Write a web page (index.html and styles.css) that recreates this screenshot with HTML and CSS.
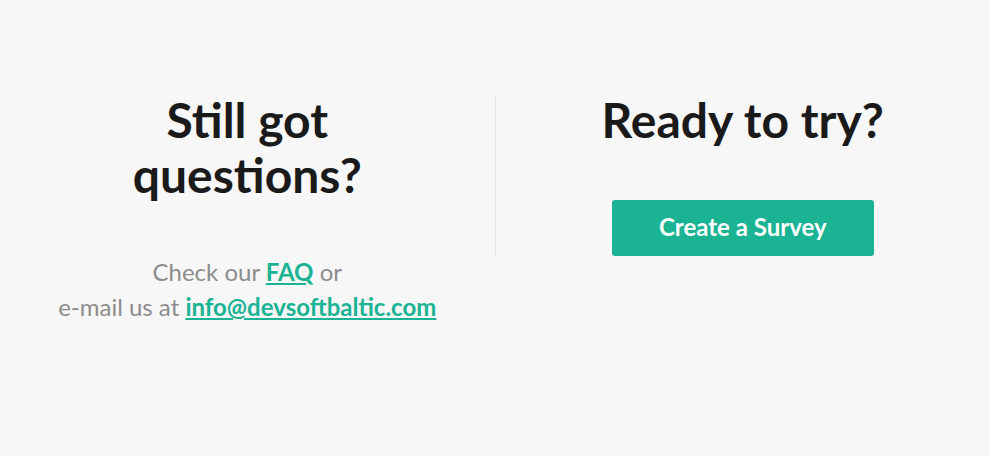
FILE: index.html
```html
<!DOCTYPE html>
<html>
<head>
<meta charset="utf-8">
<link rel="stylesheet" href="styles.css">
</head>
<body>
<section class="contact">
  <div class="col">
    <h2 class="title title-narrow">Still got questions?</h2>
    <p class="text">Check our <a href="#">FAQ</a> or<br>e-mail us at <a href="#">info@devsoftbaltic.com</a></p>
  </div>
  <div class="divider"></div>
  <div class="col">
    <h2 class="title">Ready to try?</h2>
    <a class="btn" href="#">Create a Survey</a>
  </div>
</section>
</body>
</html>
```
FILE: styles.css
```css
html, body {
  margin: 0;
  padding: 0;
  background: #f7f7f7;
}
body {
  font-family: Lato, "Open Sans", sans-serif;
  height: 456px;
}
.contact {
  display: flex;
  align-items: flex-start;
  padding-top: 92px;
}
.col {
  flex: 1 1 0;
  display: flex;
  flex-direction: column;
  align-items: center;
  text-align: center;
}
.divider {
  flex: 0 0 1px;
  height: 160px;
  margin-top: 4px;
  background: #e6e6e6;
}
.title {
  margin: 0;
  font-size: 48px;
  line-height: 55px;
  font-weight: 700;
  color: #1a1a1a;
}
.title-narrow {
  max-width: 300px;
}
.text {
  margin: 52px 0 0;
  font-size: 24px;
  line-height: 35px;
  color: #8c8c8c;
}
.text a {
  color: #1ab394;
  font-weight: 700;
  text-decoration: underline;
}
.btn {
  margin-top: 53px;
  width: 262px;
  height: 56px;
  padding-bottom: 3px;
  box-sizing: border-box;
  display: flex;
  align-items: center;
  justify-content: center;
  background: #1ab394;
  border-radius: 3px;
  color: #fff;
  font-size: 24px;
  font-weight: 700;
  text-decoration: none;
}
```
